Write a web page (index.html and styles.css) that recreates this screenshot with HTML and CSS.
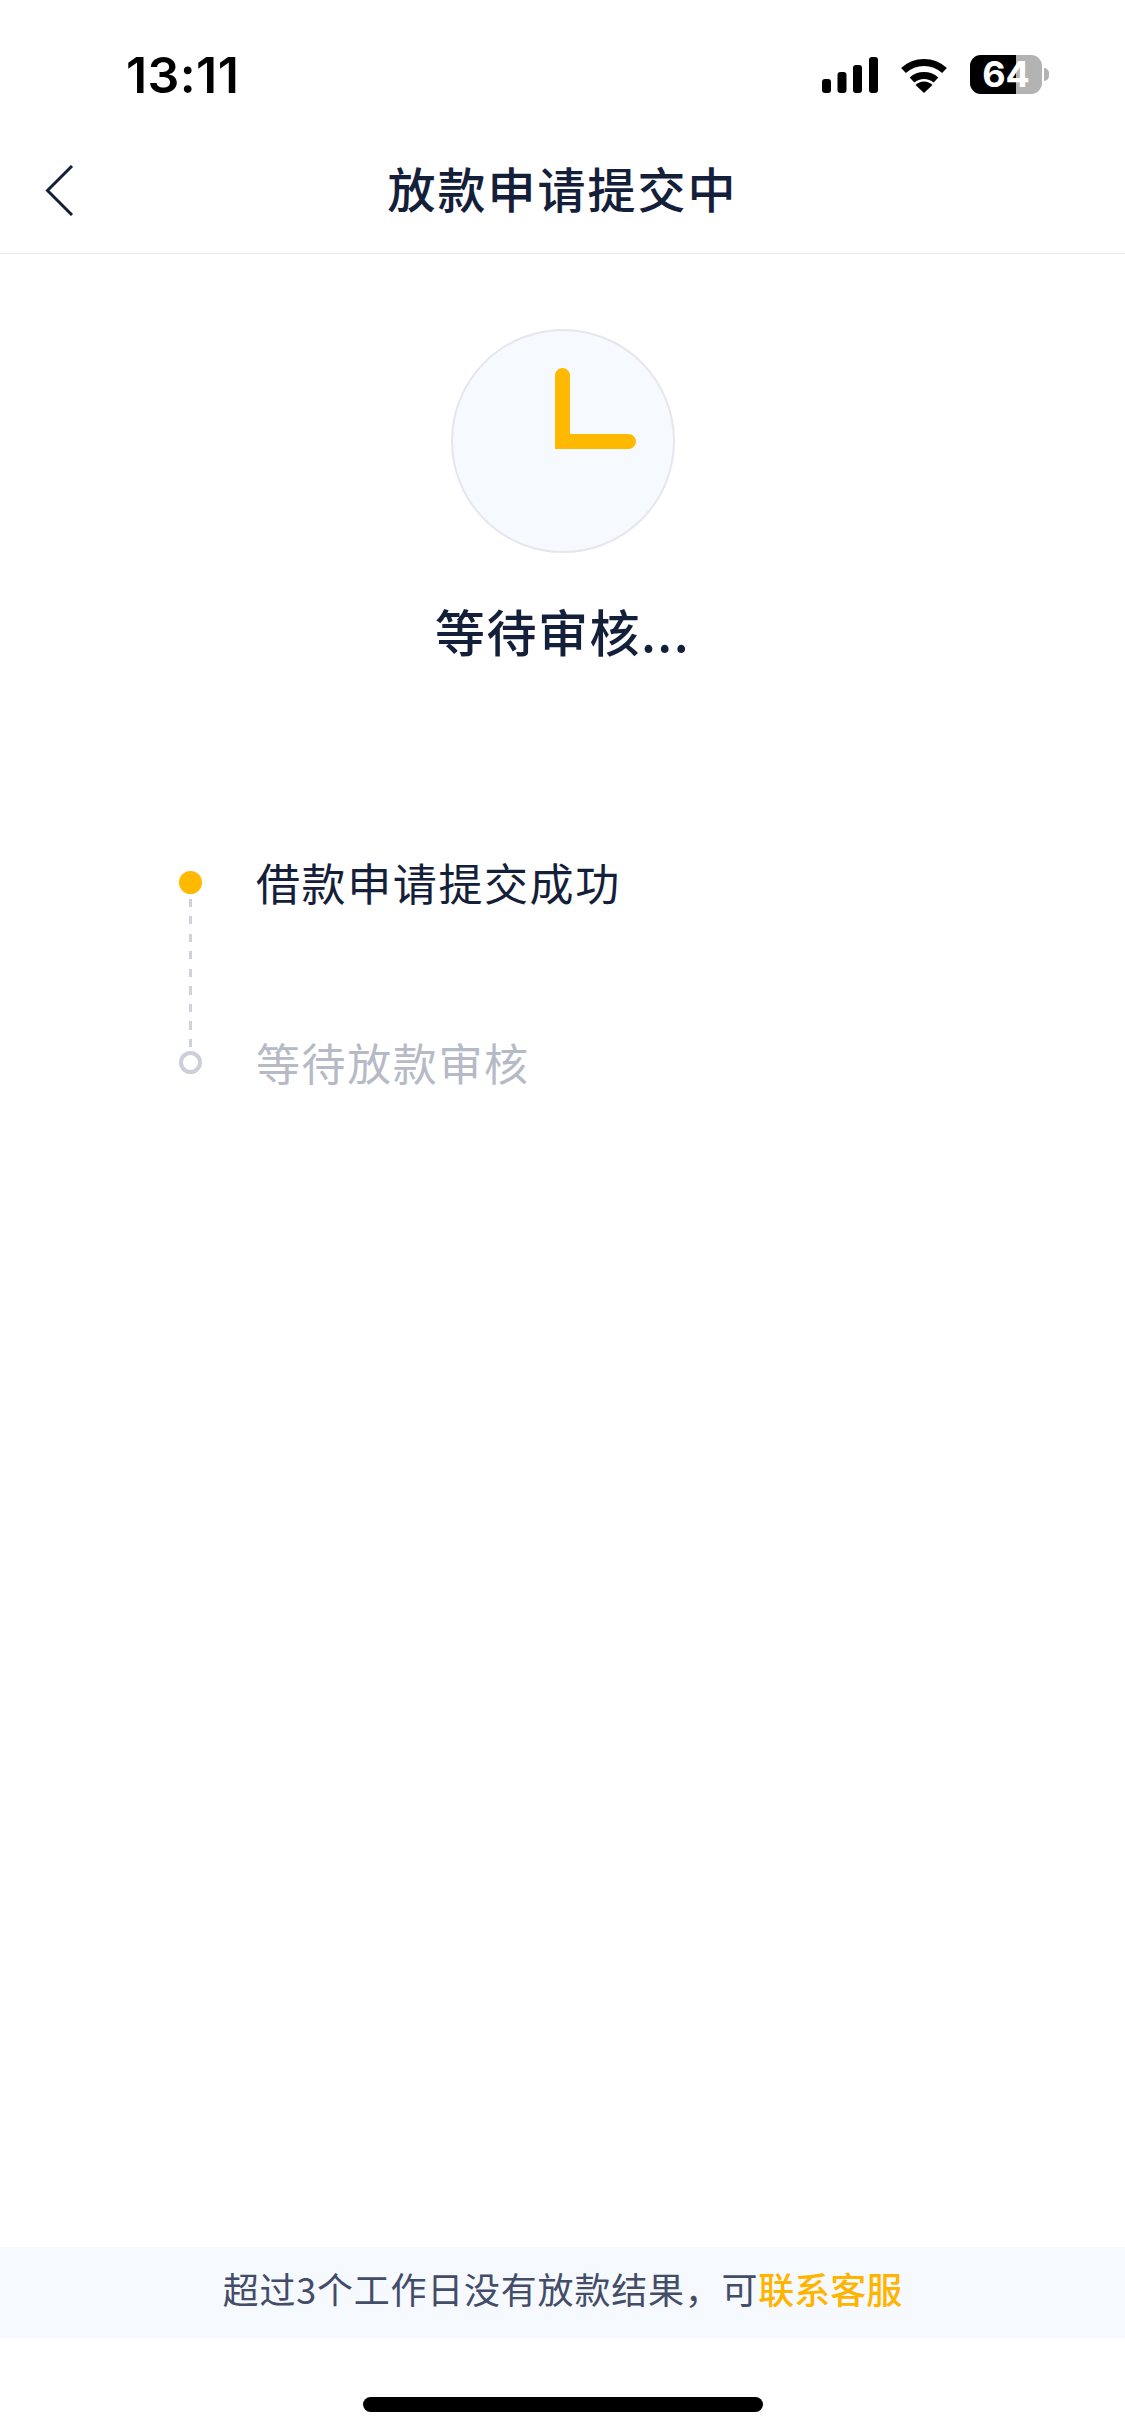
FILE: index.html
```html
<!DOCTYPE html>
<html lang="zh-CN">
	<head>
		<meta charset="utf-8">
		<title>放款申请提交中</title>
		<link rel="stylesheet" href="styles.css">
	</head>
	<body>
		<div class="page">
			<!-- status bar -->
			<div class="status-bar">
				<span class="time">13:11</span>
				<div class="status-icons">
					<svg class="signal" width="56" height="36" viewBox="0 0 56 36">
						<rect x="0" y="22" width="9" height="14" rx="3"/>
						<rect x="15.5" y="15" width="9" height="21" rx="3"/>
						<rect x="31" y="8" width="9" height="28" rx="3"/>
						<rect x="47" y="0" width="9" height="36" rx="3"/>
					</svg>
					<svg class="wifi" width="48" height="36" viewBox="0 0 48 36">
						<path d="M3.5 13.5 A30 30 0 0 1 44.5 13.5" fill="none" stroke="#000" stroke-width="7"/>
						<path d="M12 23 A18 18 0 0 1 36 23" fill="none" stroke="#000" stroke-width="7"/>
						<path d="M24 36 L15.5 28 A12 12 0 0 1 32.5 28 Z"/>
					</svg>
					<div class="battery">
						<div class="battery-body">
							<div class="battery-fill"></div>
							<span class="battery-text">64</span>
						</div>
						<div class="battery-tip"></div>
					</div>
				</div>
			</div>

			<!-- nav bar -->
			<div class="nav-bar">
				<svg class="back" width="30" height="51" viewBox="0 0 30 51">
					<path d="M27 1 L2.500 25.500 L27 50" fill="none" stroke="#14203a" stroke-width="3"/>
				</svg>
				<span class="nav-title">放款申请提交中</span>
			</div>

			<div class="content">
				<div class="clock">
					<svg width="224" height="224" viewBox="0 0 224 224">
						<path class="clock-hands" d="M111.500 46.500 V112.500 H177.500"/>
					</svg>
				</div>
				<div class="status-title">等待审核...</div>

				<div class="steps">
					<div class="step step-first">
						<div class="rail">
							<div class="dot"></div>
							<div class="dash-line"></div>
						</div>
						<div class="label">借款申请提交成功</div>
					</div>
					<div class="step">
						<div class="rail">
							<div class="ring"></div>
						</div>
						<div class="label label-pending">等待放款审核</div>
					</div>
				</div>
			</div>

			<div class="notice">超过3个工作日没有放款结果，可<a class="notice-link">联系客服</a></div>
			<div class="home-area">
				<div class="home-bar"></div>
			</div>
		</div>
	</body>
</html>
```

FILE: styles.css
```css
* {
	box-sizing: border-box;
}

body {
	margin: 0;
	background-color: white;
	font-family: "Noto Sans CJK SC", "Liberation Sans", sans-serif;
	color: #14203a;
}

.page {
	display: flex;
	flex-direction: column;
	height: 2435px;
	overflow: hidden;
}

/* status bar */
.status-bar {
	display: flex;
	justify-content: space-between;
	align-items: flex-start;
	height: 118px;
	padding: 46px 76px 0 126px;
}

.time {
	font-family: Inter, sans-serif;
	font-size: 50px;
	font-weight: 600;
	line-height: 58px;
	letter-spacing: 0.4px;
	color: black;
}

.status-icons {
	display: flex;
	align-items: flex-start;
	gap: 22px;
	padding-top: 11px;
}

.battery {
	display: flex;
	align-items: center;
	gap: 2px;
	margin-top: -2px;
}

.battery-body {
	position: relative;
	width: 72px;
	height: 39px;
	border-radius: 11px;
	background-color: #b3b3b3;
}

.battery-fill {
	width: 46px;
	height: 100%;
	border-radius: 11px 0 0 11px;
	background-color: black;
}

.battery-text {
	position: absolute;
	top: 0;
	left: 0;
	width: 100%;
	font-family: Inter, sans-serif;
	font-size: 36px;
	font-weight: 700;
	line-height: 39px;
	text-align: center;
	color: white;
}

.battery-tip {
	width: 5px;
	height: 13px;
	border-radius: 0 6px 6px 0;
	background-color: #b3b3b3;
}

/* nav bar */
.nav-bar {
	position: relative;
	display: flex;
	align-items: center;
	justify-content: center;
	height: 136px;
	border-bottom: 1px solid #e6e6ea;
}

.back {
	position: absolute;
	left: 45px;
	top: 47px;
}

.nav-title {
	font-size: 48px;
	font-weight: 500;
	letter-spacing: 2px;
	line-height: 60px;
	margin-top: 2px;
}

/* main part */
.content {
	flex: 1;
	display: flex;
	flex-direction: column;
	align-items: center;
	padding-top: 75px;
}

.clock {
	width: 224px;
	height: 224px;
	border: 2px solid #e6e6ee;
	border-radius: 50%;
	background-color: #f6f9fd;
	flex: none;
}

.clock svg {
	display: block;
	margin: -2px;
}

.clock-hands {
	fill: none;
	stroke: #ffb900;
	stroke-width: 15;
	stroke-linecap: round;
	stroke-linejoin: miter;
}

.status-title {
	margin-top: 41px;
	font-size: 50px;
	font-weight: 500;
	line-height: 72px;
	letter-spacing: 1.5px;
}

.steps {
	align-self: stretch;
	display: flex;
	flex-direction: column;
	margin-top: 194px;
	padding-left: 179px;
}

.step {
	display: flex;
	gap: 54px;
}

.step-first {
	height: 180px;
}

.rail {
	display: flex;
	flex-direction: column;
	align-items: center;
	width: 23px;
	padding-top: 11px;
}

.dot {
	flex: none;
	width: 23px;
	height: 23px;
	border-radius: 50%;
	background-color: #ffb900;
}

.dash-line {
	flex: none;
	width: 3px;
	height: 148px;
	margin-top: 5px;
	background-image: repeating-linear-gradient(to bottom, #cfd1db 0, #cfd1db 8px, transparent 8px, transparent 17.5px);
}

.ring {
	flex: none;
	width: 23px;
	height: 23px;
	border: 4px solid #ccced9;
	border-radius: 50%;
}

.label {
	font-size: 44px;
	line-height: 44px;
	letter-spacing: 1.6px;
}

.label-pending {
	color: #b6bac6;
}

/* bottom */
.notice {
	height: 91px;
	background-color: #f6f9fd;
	font-size: 36px;
	line-height: 82px;
	letter-spacing: 0.76px;
	text-align: center;
	color: #434d69;
}

.notice-link {
	font-weight: 500;
	letter-spacing: 0;
	color: #ffb400;
}

.home-area {
	height: 97px;
	padding-top: 59px;
}

.home-bar {
	width: 400px;
	height: 15px;
	margin: 0 auto;
	border-radius: 8px;
	background-color: black;
}
```
